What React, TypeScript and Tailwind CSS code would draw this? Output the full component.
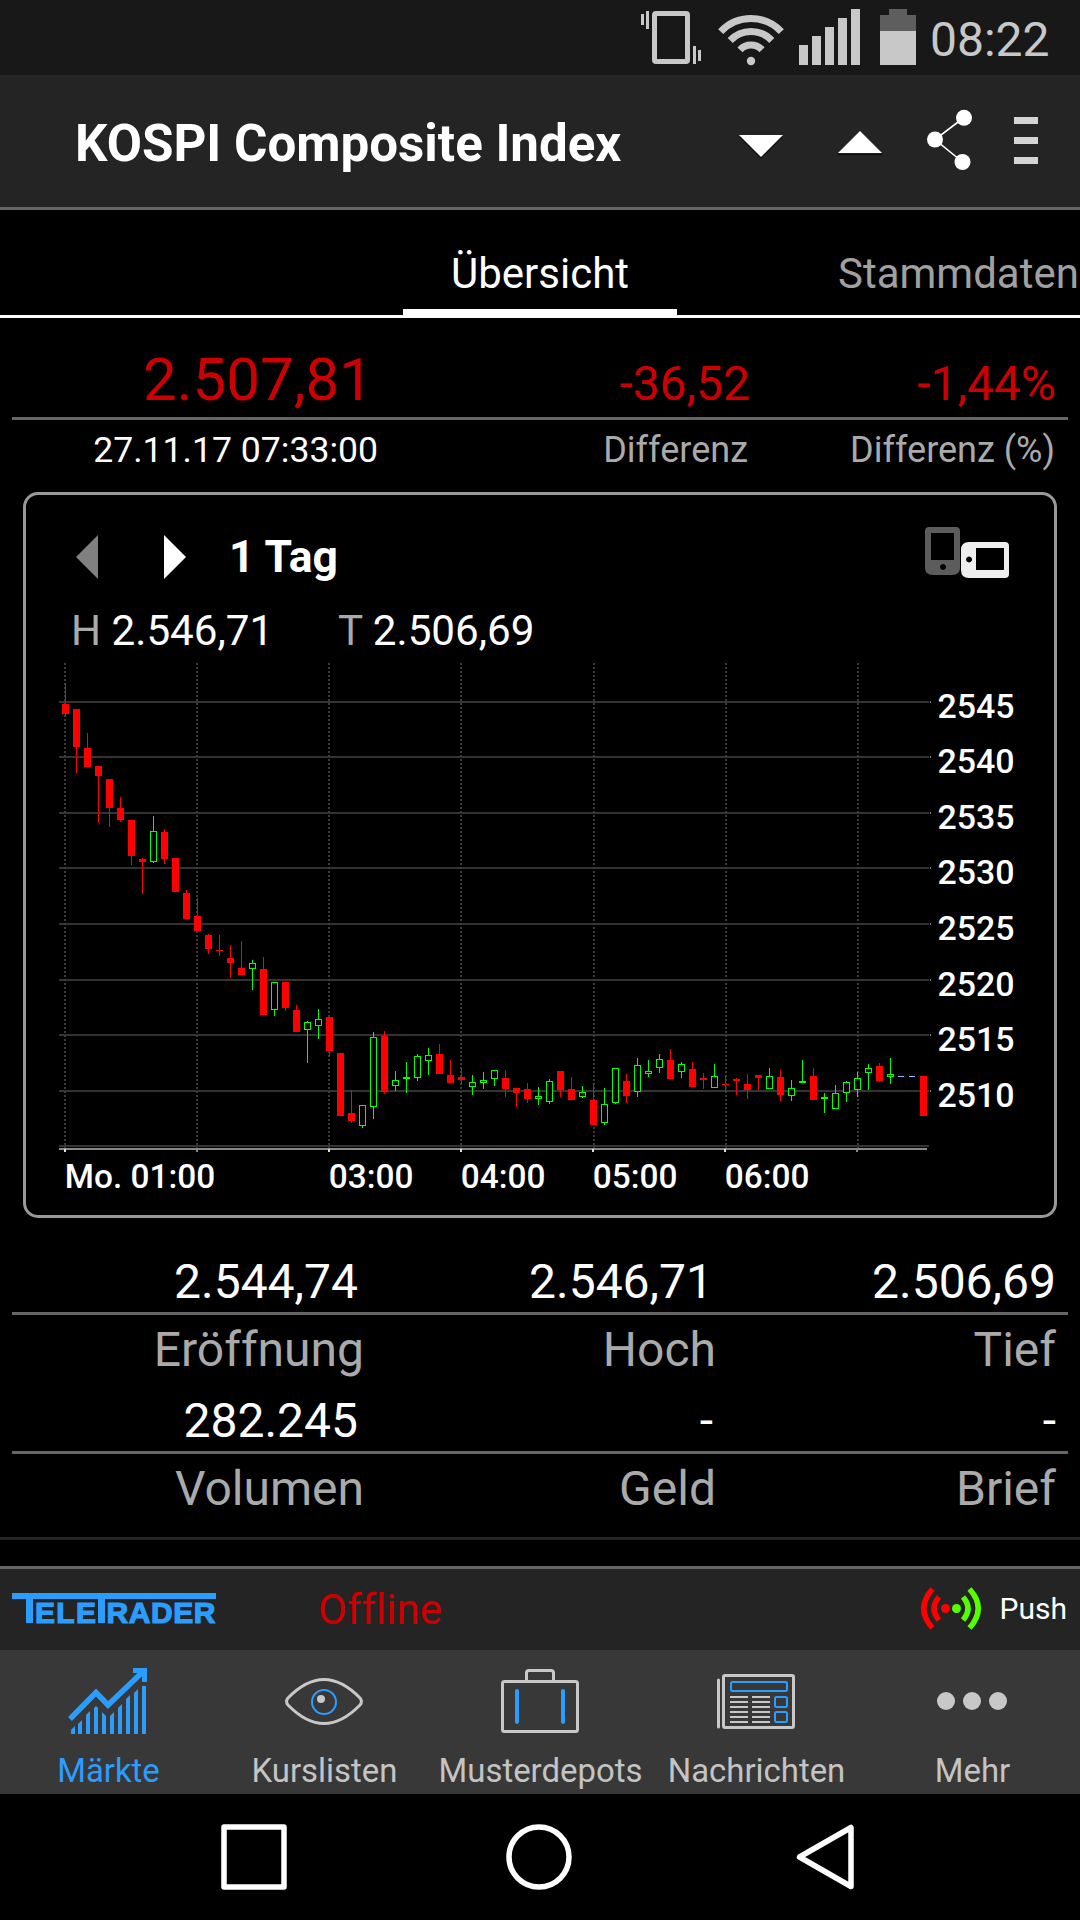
import type { ReactNode } from "react";

// Candle: [rising (1) or falling (0), high, body top, body bottom, low]
type Candle = [number, number, number, number, number];

const CANDLES: Candle[] = [
  [0, 683, 704, 714, 716],
  [0, 709, 709, 747, 773],
  [0, 733, 748, 767, 767],
  [0, 766, 766, 776, 823],
  [0, 779, 779, 808, 827],
  [0, 797, 808, 820, 822],
  [0, 820, 820, 856, 865],
  [0, 858, 859, 862, 894],
  [1, 816, 831, 862, 863],
  [0, 829, 832, 859, 864],
  [0, 858, 858, 892, 892],
  [0, 890, 893, 919, 919],
  [0, 898, 916, 931, 931],
  [0, 934, 935, 949, 954],
  [0, 935, 950, 951, 956],
  [0, 945, 958, 963, 977],
  [0, 941, 968, 975, 975],
  [1, 960, 963, 969, 990],
  [0, 957, 969, 1015, 1015],
  [1, 982, 982, 1010, 1016],
  [0, 982, 982, 1008, 1011],
  [0, 1005, 1010, 1032, 1032],
  [1, 1021, 1022, 1030, 1063],
  [1, 1009, 1019, 1026, 1039],
  [0, 1017, 1017, 1051, 1056],
  [0, 1053, 1053, 1116, 1116],
  [0, 1090, 1113, 1121, 1123],
  [1, 1105, 1105, 1126, 1128],
  [1, 1032, 1037, 1107, 1119],
  [0, 1031, 1036, 1092, 1094],
  [1, 1071, 1080, 1086, 1091],
  [1, 1062, 1077, 1079, 1093],
  [1, 1054, 1056, 1078, 1081],
  [1, 1048, 1055, 1061, 1075],
  [0, 1044, 1054, 1074, 1074],
  [0, 1060, 1075, 1083, 1083],
  [0, 1068, 1077, 1080, 1085],
  [1, 1075, 1082, 1087, 1095],
  [1, 1072, 1080, 1083, 1089],
  [1, 1070, 1070, 1079, 1086],
  [0, 1070, 1078, 1089, 1097],
  [0, 1088, 1088, 1093, 1107],
  [0, 1083, 1089, 1099, 1103],
  [1, 1087, 1096, 1099, 1105],
  [1, 1079, 1081, 1102, 1104],
  [0, 1071, 1071, 1090, 1097],
  [0, 1077, 1089, 1100, 1100],
  [1, 1086, 1092, 1097, 1098],
  [0, 1083, 1100, 1125, 1125],
  [1, 1088, 1104, 1123, 1125],
  [1, 1068, 1068, 1103, 1104],
  [0, 1074, 1081, 1096, 1103],
  [1, 1058, 1065, 1092, 1097],
  [1, 1060, 1071, 1074, 1077],
  [1, 1054, 1059, 1068, 1073],
  [0, 1049, 1060, 1079, 1079],
  [1, 1062, 1064, 1072, 1078],
  [0, 1062, 1069, 1087, 1087],
  [0, 1073, 1078, 1080, 1089],
  [1, 1064, 1076, 1088, 1088],
  [0, 1076, 1084, 1085, 1091],
  [0, 1078, 1079, 1081, 1095],
  [0, 1074, 1084, 1090, 1099],
  [0, 1075, 1075, 1078, 1090],
  [1, 1068, 1076, 1089, 1089],
  [0, 1070, 1077, 1095, 1101],
  [1, 1080, 1088, 1096, 1101],
  [1, 1060, 1081, 1083, 1083],
  [0, 1068, 1076, 1100, 1100],
  [1, 1093, 1097, 1099, 1113],
  [1, 1085, 1093, 1109, 1109],
  [1, 1081, 1082, 1093, 1102],
  [1, 1072, 1078, 1090, 1097],
  [1, 1064, 1068, 1073, 1090],
  [0, 1063, 1066, 1081, 1082],
  [1, 1058, 1074, 1077, 1084],
];

const GRID = [
  { y: 701, label: "2545" },
  { y: 756, label: "2540" },
  { y: 812, label: "2535" },
  { y: 867, label: "2530" },
  { y: 923, label: "2525" },
  { y: 979, label: "2520" },
  { y: 1034, label: "2515" },
  { y: 1090, label: "2510" },
  { y: 1145, label: "" },
];

const HOURS = [
  { x: 64, label: "Mo. 01:00", bright: true },
  { x: 196, label: "", bright: false },
  { x: 328, label: "03:00", bright: true },
  { x: 460, label: "04:00", bright: true },
  { x: 592, label: "05:00", bright: true },
  { x: 724, label: "06:00", bright: true },
  { x: 856, label: "", bright: false },
];

function Chart() {
  return (
    <svg
      width="1028"
      height="554"
      viewBox="26 661 1028 554"
      className="block font-['Roboto',sans-serif] text-[33.9px] font-medium"
    >
      {GRID.map((g) => (
        <g key={g.y}>
          <rect x="59" y={g.y} width="870" height="2" fill="#333" />
          {g.label && <rect x="930" y={g.y} width="1" height="2" fill="#888" />}
          {g.label && (
            <text x="937.5" y={g.y + 16.5} fill="#fff">
              {g.label}
            </text>
          )}
        </g>
      ))}
      {HOURS.map((h, i) => (
        <line
          key={h.x}
          x1={h.x + (i > 3 ? 2 : 1)}
          x2={h.x + (i > 3 ? 2 : 1)}
          y1="663"
          y2="1148"
          stroke="#3a3a3a"
          strokeWidth="2"
          strokeDasharray="2 2"
        />
      ))}
      <rect x="59" y="1148" width="868" height="2" fill="#888" />
      {HOURS.map((h) => (
        <g key={h.x}>
          <rect x={h.x} y="1149" width="2" height="3" fill={h.bright ? "#ddd" : "#888"} />
          {h.label && (
            <text x={h.x + 0.8} y="1188" fill="#fff" className="text-[33.4px]">
              {h.label}
            </text>
          )}
        </g>
      ))}
      {CANDLES.map(([up, high, top, bottom, low], i) => {
        const x = 62 + i * 11;
        const color = up ? "#0f0" : "#f00";
        return (
          <g key={i}>
            <rect x={x + 3} y={high} width="1" height={top - high} fill={color} />
            <rect x={x + 3} y={bottom} width="1" height={low - bottom} fill={color} />
            {up && bottom - top > 2 ? (
              <rect
                x={x + 0.5}
                y={top + 0.5}
                width="6"
                height={bottom - top - 1}
                fill="#000"
                stroke={color}
              />
            ) : (
              <rect x={x} y={top} width="7" height={bottom - top} fill={color} />
            )}
          </g>
        );
      })}
      <rect x="898" y="1076" width="6" height="1" fill="#9bf" />
      <rect x="909" y="1076" width="6" height="1" fill="#9bf" />
      <rect x="920" y="1076" width="7" height="40" fill="#f00" />
    </svg>
  );
}

function StatusBar() {
  return (
    <div className="flex h-[75px] justify-end bg-[#181818] pr-[29px]">
      <svg width="280" height="75" viewBox="640 0 280 75" fill="#c8c8c8">
        <rect x="641" y="14" width="3" height="11" />
        <rect x="646" y="11" width="3" height="18" />
        <rect x="654.5" y="13.5" width="33" height="48" rx="1.5" fill="none" stroke="#c8c8c8" strokeWidth="5" />
        <rect x="693" y="46" width="3" height="18" />
        <rect x="698" y="50" width="3" height="11" />
        <g fill="none" stroke="#c8c8c8" strokeWidth="7">
          <path d="M720.7 31.7A41.5 41.5 0 0 1 781.3 31.7" />
          <path d="M730.2 40.5A28.5 28.5 0 0 1 771.8 40.5" />
          <path d="M740 49.8A15 15 0 0 1 762 49.8" />
        </g>
        <circle cx="751" cy="61" r="4.2" />
        <rect x="799" y="45" width="9" height="20" />
        <rect x="812" y="36" width="9" height="29" />
        <rect x="825" y="27" width="9" height="38" />
        <rect x="838" y="18" width="9" height="47" />
        <rect x="851" y="9" width="9" height="56" />
        <path d="M880 15h9V9h18v6h9v16h-36z" fill="#5e5e5e" />
        <rect x="880" y="31" width="36" height="34" />
      </svg>
      <div className="w-[131px] pt-[3px] pl-[10px] text-[48px] leading-[74px] whitespace-nowrap text-[#c8c8c8]">
        08:22
      </div>
    </div>
  );
}

function Header() {
  return (
    <div className="flex h-[135px] items-center border-b-[3px] border-[#666] bg-[#242424] pl-[75px]">
      <h1 className="flex-1 pt-[5px] text-[51.1px] leading-[60px] font-bold whitespace-nowrap">
        KOSPI Composite Index
      </h1>
      <svg width="350" height="132" viewBox="730 75 350 132" fill="#fff">
        <path d="M739 137l22 22 22-22z" fill="#111" />
        <path d="M739 135h44l-22 22z" />
        <path d="M838 154h44v1h-44z" fill="#0a0a0a" />
        <path d="M838 153h44l-22-22z" />
        <path d="M964 117.500L935 139.500L962.500 162" fill="none" stroke="#fff" strokeWidth="1.600" />
        <circle cx="964" cy="117.800" r="8" />
        <circle cx="935" cy="139.500" r="8" />
        <circle cx="962.500" cy="162" r="8" />
        <g fill="#d4d4d4">
          <rect x="1014" y="117" width="24" height="7" />
          <rect x="1014" y="137" width="24" height="7" />
          <rect x="1014" y="157" width="24" height="7" />
        </g>
      </svg>
    </div>
  );
}

function Tabs() {
  return (
    <div className="flex h-[108px] overflow-hidden border-b-[3px] border-white text-[42px] leading-[83px] whitespace-nowrap">
      <div className="ml-[403px] w-[274px] border-b-[6px] border-white pt-[22px] text-center">Übersicht</div>
      <div className="ml-[161px] pt-[22px] text-[#a0a0a0]">Stammdaten</div>
    </div>
  );
}

function Row({ className, children }: { className: string; children: ReactNode }) {
  return (
    <div className={`mx-3 grid text-right whitespace-nowrap ${className}`}>{children}</div>
  );
}

function Quote() {
  return (
    <>
      <Row className="h-[102px] grid-cols-[366px_372px_306px] items-end border-b-[3px] border-[#666] text-[48px] leading-[67px] text-[#c00]">
        <div className="pr-[5px] text-[60px] leading-[75px]">2.507,81</div>
        <div>-36,52</div>
        <div>-1,44%</div>
      </Row>
      <Row className="h-[72px] grid-cols-[366px_370px_307px] text-[36px] leading-[61px] text-[#aaa]">
        <div className="text-[35.6px] text-white">27.11.17 07:33:00</div>
        <div>Differenz</div>
        <div>Differenz (%)</div>
      </Row>
    </>
  );
}

function ChartPanel() {
  return (
    <section className="mx-[23px] h-[726px] rounded-[15px] border-[3px] border-[#999]">
      <div className="flex h-[104px] items-center pt-[20px] pr-[45px] pl-[50px]">
        <svg width="22" height="44" viewBox="0 0 22 44">
          <path d="M22 0v44L0 22z" fill="#808080" />
        </svg>
        <svg width="22" height="44" viewBox="0 0 22 44" className="ml-[66px]">
          <path d="M0 0v44l22-22z" fill="#fff" />
        </svg>
        <div className="ml-[43px] flex-1 text-[44.5px] leading-[60px] font-bold">1 Tag</div>
        <svg width="84" height="52" viewBox="925 528 84 52" className="-mt-2">
          <path
            fill="#5c5c5c"
            fillRule="evenodd"
            d="M929 528h27q4 0 4 4v37q0 7-8 7h-19q-8 0-8-7v-37q0-4 4-4zM931 534v27h23v-27zM943 565a3 3 0 1 0 .1 0z"
          />
          <path
            fill="#eee"
            fillRule="evenodd"
            d="M969 543h36q4 0 4 4v28q0 4-4 4h-36q-8 0-8-8v-20q0-8 8-8zM976 549v22h28v-22zM969 557.500a3 3 0 1 0 .1 0z"
          />
        </svg>
      </div>
      <div className="flex h-[62px] pl-[45px] text-[42.2px] leading-[64px]">
        <div className="w-[267px]">
          <span className="text-[#aaa]">H</span> 2.546,71
        </div>
        <div>
          <span className="text-[#aaa]">T</span> 2.506,69
        </div>
      </div>
      <Chart />
    </section>
  );
}

function Stats() {
  return (
    <div className="text-[48px]">
      <Row className="h-[97px] grid-cols-[346px_355px_343px] items-end border-b-[3px] border-[#666] leading-[61px]">
        <div>2.544,74</div>
        <div>2.546,71</div>
        <div>2.506,69</div>
      </Row>
      <Row className="h-[69px] grid-cols-[352px_352px_340px] leading-[69px] text-[#aaa]">
        <div>Eröffnung</div>
        <div>Hoch</div>
        <div>Tief</div>
      </Row>
      <Row className="h-[70px] grid-cols-[346px_355px_343px] items-end border-b-[3px] border-[#666] leading-[61px]">
        <div>282.245</div>
        <div>-</div>
        <div>-</div>
      </Row>
      <Row className="h-[83px] grid-cols-[352px_352px_340px] leading-[69px] text-[#aaa]">
        <div>Volumen</div>
        <div>Geld</div>
        <div>Brief</div>
      </Row>
    </div>
  );
}

function PushBar() {
  return (
    <div className="flex h-[84px] items-center border-t-[3px] border-[#666] bg-[#242424]">
      <svg
        width="208"
        height="60"
        viewBox="12 1579 208 60"
        aria-label="TeleTrader"
        className="mb-px ml-3 font-['Liberation_Sans',sans-serif] text-[30px] font-bold"
        fill="#2b9dff"
        stroke="#2b9dff"
      >
        <g stroke="none">
          <rect x="12" y="1593" width="204" height="6" />
          <rect x="26" y="1593" width="7" height="30" />
          <rect x="98" y="1593" width="7" height="30" />
        </g>
        <text x="35" y="1622.500" textLength="61" strokeWidth="1.200">
          ELE
        </text>
        <text x="106.500" y="1622.500" textLength="109" strokeWidth="1.200">
          RADER
        </text>
      </svg>
      <div className="ml-[98px] flex-1 text-[42px] leading-[60px] text-[#c00]">Offline</div>
      <svg
        width="64"
        height="44"
        viewBox="920 1585 64 44"
        fill="none"
        strokeWidth="5.500"
        className="mb-[4px]"
      >
        <g stroke="#f00">
          <path d="M933.500 1588Q916 1607.500 933.500 1627" />
          <path d="M940 1596Q930 1607.500 940 1619" />
          <circle cx="946.500" cy="1607.500" r="4.500" fill="#f00" stroke="none" />
        </g>
        <g stroke="#5f0">
          <path d="M970.500 1588Q988 1607.500 970.500 1627" />
          <path d="M964 1596Q974 1607.500 964 1619" />
          <circle cx="957.500" cy="1607.500" r="4.500" fill="#5f0" stroke="none" />
        </g>
      </svg>
      <div className="mb-[2px] w-[97px] pr-[13px] text-right text-[30px] leading-[40px]">Push</div>
    </div>
  );
}

function NavItem({ label, active, children }: { label: string; active?: boolean; children: ReactNode }) {
  return (
    <div
      className={`flex flex-col items-center text-[32.9px] leading-[46px] whitespace-nowrap ${active ? "text-[#2b9dff]" : "text-[#c4c4c4]"}`}
    >
      {children}
      <span className="pl-px">{label}</span>
    </div>
  );
}

function BottomNav() {
  const grey = "#c8c8c8";
  const blue = "#2b9dff";
  return (
    <nav className="grid h-[144px] grid-cols-5 bg-[#383838]">
      <NavItem label="Märkte" active>
        <svg width="216" height="98" viewBox="0 1650 216 98" fill={blue}>
          <path d="M71 1734v-4l4-4v8zM78 1734v-10l4-4v14zM86 1734v-19l4-4v23zM94 1734v-26l2-2 2 2v26zM102 1734v-22l4 4v18zM110 1734v-18l4-4v22zM118 1734v-26l4-4v30zM126 1734v-35l4-4v39zM134 1734v-41l4-4v45zM142 1734v-48h4v48z" />
          <path
            d="M70 1719L96 1692.500L108 1705L142 1672.500"
            fill="none"
            stroke={blue}
            strokeWidth="5.500"
          />
          <path d="M133 1668h14v14h-5v-9h-9z" />
        </svg>
      </NavItem>
      <NavItem label="Kurslisten">
        <svg width="216" height="98" viewBox="216 1650 216 98" fill="none">
          <path
            d="M288 1698Q324 1661 360 1698Q363 1701.500 360 1705Q324 1742 288 1705Q285 1701.500 288 1698z"
            stroke={grey}
            strokeWidth="3"
          />
          <circle cx="324" cy="1702" r="12" stroke={blue} strokeWidth="2" />
          <circle cx="321" cy="1699" r="4" fill={grey} />
        </svg>
      </NavItem>
      <NavItem label="Musterdepots">
        <svg width="216" height="98" viewBox="432 1650 216 98" fill="none" stroke={grey} strokeWidth="3">
          <rect x="502.500" y="1681.500" width="75" height="50" rx="2" />
          <path d="M526.500 1681v-8q0-2.500 2.500-2.500h22q2.500 0 2.500 2.500v8" />
          <path d="M517 1691v31M563 1691v31" stroke={blue} strokeWidth="4" strokeLinecap="round" />
        </svg>
      </NavItem>
      <NavItem label="Nachrichten">
        <svg width="216" height="98" viewBox="648 1650 216 98" fill="none" stroke={grey}>
          <rect x="723.500" y="1675.500" width="70" height="52" rx="1.500" strokeWidth="3" />
          <path d="M718.500 1680v47" strokeWidth="3" strokeLinecap="round" />
          <path
            d="M730 1697h18M730 1702h18M730 1707h18M730 1712h18M730 1717h18M730 1722h18M752 1697h18M752 1702h18M752 1707h18M752 1712h18M752 1717h18M752 1722h18"
            strokeWidth="2"
          />
          <g stroke={blue} strokeWidth="2">
            <rect x="731" y="1682" width="56" height="9" rx="1.500" />
            <rect x="775" y="1697" width="12" height="10" rx="1.500" />
            <rect x="775" y="1712" width="12" height="10" rx="1.500" />
          </g>
        </svg>
      </NavItem>
      <NavItem label="Mehr">
        <svg width="216" height="98" viewBox="864 1650 216 98" fill={grey}>
          <circle cx="946" cy="1701" r="9" />
          <circle cx="972" cy="1701" r="9" />
          <circle cx="998" cy="1701" r="9" />
        </svg>
      </NavItem>
    </nav>
  );
}

function SystemNav() {
  return (
    <div className="flex h-[126px] items-center bg-black">
      <svg width="1080" height="126" viewBox="0 1794 1080 126" fill="none" stroke="#fff" strokeWidth="5.500" strokeLinejoin="round">
        <rect x="224" y="1827" width="60" height="60" />
        <circle cx="539" cy="1857" r="30" />
        <path d="M851 1827.500v59L799.500 1857z" />
      </svg>
    </div>
  );
}

export default function App() {
  return (
    <div className="flex h-[1920px] w-[1080px] flex-col overflow-hidden bg-black font-['Roboto',sans-serif] text-white [font-variant-ligatures:none]">
      <StatusBar />
      <Header />
      <Tabs />
      <Quote />
      <ChartPanel />
      <Stats />
      <div className="mb-[26px] h-[3px] bg-[#242424]" />
      <PushBar />
      <BottomNav />
      <SystemNav />
    </div>
  );
}
